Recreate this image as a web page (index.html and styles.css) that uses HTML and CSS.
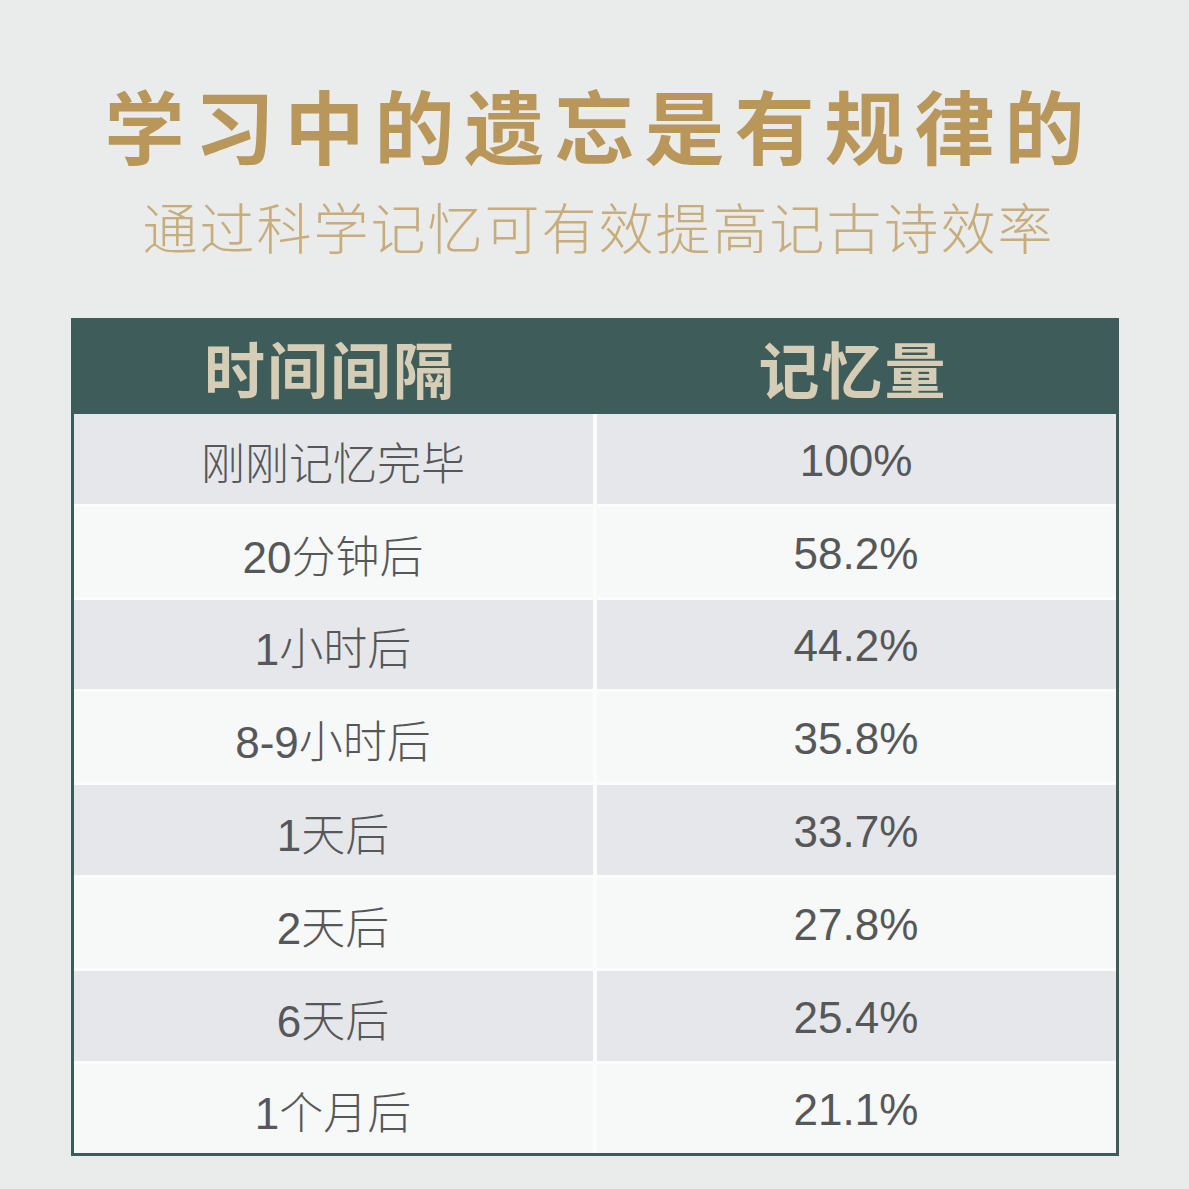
FILE: index.html
```html
<!DOCTYPE html>
<html lang="zh-CN">
<head>
<meta charset="utf-8">
<title>学习中的遗忘是有规律的</title>
<link rel="stylesheet" href="styles.css">
</head>
<body>
<main class="page">
  <h1 class="title">学习中的遗忘是有规律的</h1>
  <p class="subtitle">通过科学记忆可有效提高记古诗效率</p>
  <section class="table">
    <div class="head">
      <div class="hcell">时间间隔</div>
      <div class="hcell">记忆量</div>
    </div>
    <div class="body">
      <div class="cell odd">刚刚记忆完毕</div><div class="cell odd">100%</div>
      <div class="cell even">20分钟后</div><div class="cell even">58.2%</div>
      <div class="cell odd">1小时后</div><div class="cell odd">44.2%</div>
      <div class="cell even">8-9小时后</div><div class="cell even">35.8%</div>
      <div class="cell odd">1天后</div><div class="cell odd">33.7%</div>
      <div class="cell even">2天后</div><div class="cell even">27.8%</div>
      <div class="cell odd">6天后</div><div class="cell odd">25.4%</div>
      <div class="cell even">1个月后</div><div class="cell even">21.1%</div>
    </div>
  </section>
</main>
</body>
</html>
```

FILE: styles.css
```css
html, body {
  margin: 0;
  padding: 0;
  background: #eaeceb;
}
.page {
  width: 1189px;
  height: 1189px;
  display: flex;
  flex-direction: column;
  align-items: center;
  font-family: "Noto Sans CJK SC", sans-serif;
}
.title {
  margin: 83px 0 0 10px;
  font-size: 80px;
  line-height: 1;
  font-weight: 700;
  letter-spacing: 10px;
  color: #b9975b;
}
.subtitle {
  margin: 35px 0 0 8px;
  font-size: 55px;
  line-height: 1;
  font-weight: 300;
  letter-spacing: 2px;
  color: #c8ad7c;
}
.table {
  margin-top: 65px;
  width: 1042px;
  border: 3px solid #3d5b59;
  background: #fcfcfc;
}
.head {
  height: 93px;
  background: #3e5c5a;
  display: grid;
  grid-template-columns: 1fr 1fr;
  column-gap: 4px;
}
.hcell {
  display: flex;
  align-items: center;
  justify-content: center;
  font-size: 61px;
  font-weight: 700;
  color: #d5cdb5;
  letter-spacing: 2px;
  padding-right: 6px;
}
.body {
  display: grid;
  grid-template-columns: 1fr 1fr;
  grid-auto-rows: 89.8px;
  column-gap: 4px;
  row-gap: 3px;
}
.cell {
  display: flex;
  align-items: center;
  justify-content: center;
  padding-top: 4px;
  font-family: "Liberation Sans", "Noto Sans CJK SC", sans-serif;
  font-size: 44px;
  font-weight: 300;
  color: #555759;
}
.odd { background: #e6e7ea; }
.even { background: #f7f8f8; }
```
